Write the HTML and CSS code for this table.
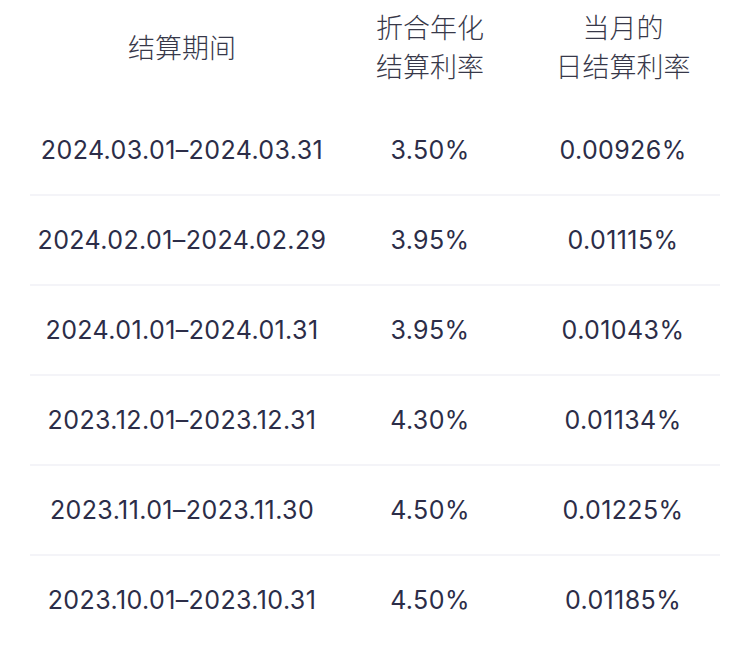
FILE: index.html
```html
<!DOCTYPE html>
<html lang="zh-CN">
<head>
<meta charset="utf-8">
<link rel="stylesheet" href="styles.css">
</head>
<body>
<div class="table">
  <div class="row head">
    <div class="c1">结算期间</div>
    <div class="c2">折合年化<br>结算利率</div>
    <div class="c3">当月的<br>日结算利率</div>
  </div>
  <div class="row">
    <div class="c1">2024.03.01–2024.03.31</div>
    <div class="c2">3.50%</div>
    <div class="c3">0.00926%</div>
  </div>
  <div class="row">
    <div class="c1">2024.02.01–2024.02.29</div>
    <div class="c2">3.95%</div>
    <div class="c3">0.01115%</div>
  </div>
  <div class="row">
    <div class="c1">2024.01.01–2024.01.31</div>
    <div class="c2">3.95%</div>
    <div class="c3">0.01043%</div>
  </div>
  <div class="row">
    <div class="c1">2023.12.01–2023.12.31</div>
    <div class="c2">4.30%</div>
    <div class="c3">0.01134%</div>
  </div>
  <div class="row">
    <div class="c1">2023.11.01–2023.11.30</div>
    <div class="c2">4.50%</div>
    <div class="c3">0.01225%</div>
  </div>
  <div class="row last">
    <div class="c1">2023.10.01–2023.10.31</div>
    <div class="c2">4.50%</div>
    <div class="c3">0.01185%</div>
  </div>
</div>
</body>
</html>
```
FILE: styles.css
```css
html, body {
  margin: 0;
  padding: 0;
  background: #ffffff;
}
body {
  font-family: Inter, "Noto Sans CJK SC", sans-serif;
  color: #2c2d48;
}
.table {
  margin: 0 30px;
  width: 690px;
}
.row {
  display: grid;
  grid-template-columns: 304px 192px 194px;
  align-items: center;
  height: 88px;
  border-bottom: 2px solid #f4f4f8;
  font-size: 25px;
  letter-spacing: 0.4px;
  text-align: center;
}
.row.last {
  border-bottom: none;
}
.row.head {
  height: 106px;
  border-bottom: none;
  align-items: start;
  padding-top: 7px;
  box-sizing: border-box;
  font-family: "Noto Sans CJK SC", sans-serif;
  font-weight: 300;
  font-size: 27px;
  letter-spacing: 0;
  line-height: 39px;
  color: #373849;
}
.row.head .c1 {
  padding-top: 20px;
}
```
